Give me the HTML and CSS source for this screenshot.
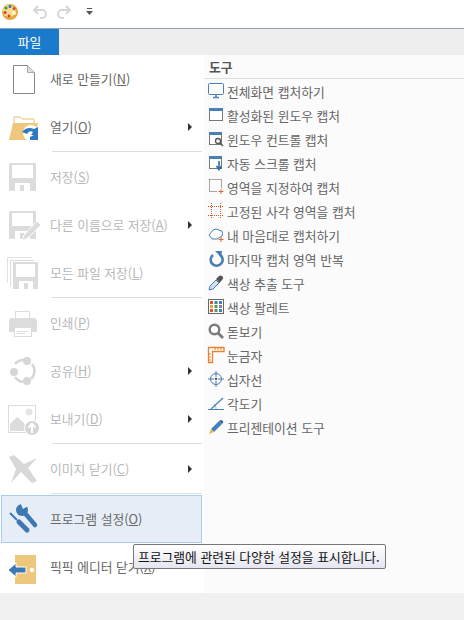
FILE: index.html

```html
<!DOCTYPE html>
<html lang="ko">
<head>
<meta charset="utf-8"/>
<title>픽픽 에디터</title>
<link rel="stylesheet" href="styles.css">
</head>
<body>
<div class="toolbar">
  <svg class="logo" width="18" height="18" viewBox="0 0 18 18">
    <ellipse cx="9" cy="9" rx="8" ry="8" fill="#e6a93e"/>
    <ellipse cx="8" cy="8" rx="6.500" ry="6" fill="#f7dc8c"/>
    <circle cx="5" cy="5" r="1.600" fill="#3f9a3a"/>
    <circle cx="9" cy="3.600" r="1.500" fill="#2f78c4"/>
    <circle cx="13" cy="5.400" r="1.500" fill="#d9483a"/>
    <circle cx="4" cy="9.500" r="1.600" fill="#d93a3a"/>
    <circle cx="8" cy="13" r="1.400" fill="#d93a3a"/>
    <circle cx="13" cy="10" r="2" fill="#fff3cf"/>
  </svg>
  <svg class="undo" width="16" height="16" viewBox="0 0 16 16"><path d="M6 2 L2 6 L6 10 M2.500 6 H10 A4 4 0 0 1 10 14 H8" fill="none" stroke="#d6d6d6" stroke-width="2"/></svg>
  <svg class="redo" width="16" height="16" viewBox="0 0 16 16"><path d="M10 2 L14 6 L10 10 M13.500 6 H6 A4 4 0 0 0 6 14 H8" fill="none" stroke="#d6d6d6" stroke-width="2"/></svg>
  <svg class="qat" width="7" height="8" viewBox="0 0 7 8"><path d="M1 0.500 H6" stroke="#555"/><path d="M0 3 H7 L3.500 7 Z" fill="#555"/></svg>
</div>
<div class="tabbar"><div class="tab">파일</div></div>

<div class="menu">
  <div class="left">
    <div class="item">
      <svg class="big" width="32" height="32" viewBox="0 0 32 32"><path d="M5.500 2.500 H19.500 L26.500 9.500 V30.500 H5.500 Z" fill="#fff" stroke="#888"/><path d="M19.500 2.500 V9.500 H26.500" fill="#ddd" stroke="#aaa"/></svg>
      <span>새로 만들기(<u>N</u>)</span>
    </div>
    <div class="item arrow">
      <svg class="big" width="32" height="32" viewBox="0 0 32 32"><path d="M6 6 H12 L14 8 H26 V14 H6 Z" fill="#fff" stroke="#e5c078"/><path d="M5 12 H30 L26 29 H1 Z" fill="#edc77c"/><circle cx="23" cy="22" r="8" fill="#fff"/><path d="M14 21 Q19 15 26 18 L30 16 V24 H23 L25 21 Q21 19 19 23 Z" fill="#2f78c4"/><path d="M22 26 L26 24 L30 24 V29 H22 Z" fill="#2f78c4"/></svg>
      <span>열기(<u>O</u>)</span>
    </div>
    <div class="sep"></div>
    <div class="item off">
      <svg class="big" width="32" height="32" viewBox="0 0 32 32"><path d="M1 2 H28 V30 H1 Z" fill="#dcdcdc"/><rect x="4" y="4" width="21" height="13" fill="#fff"/><rect x="7" y="22" width="15" height="8" fill="#fff"/><rect x="12" y="24" width="4" height="6" fill="#dcdcdc"/></svg>
      <span>저장(<u>S</u>)</span>
    </div>
    <div class="item off arrow">
      <svg class="big" width="32" height="32" viewBox="0 0 32 32"><path d="M1 2 H28 V30 H1 Z" fill="#dcdcdc"/><rect x="4" y="4" width="21" height="13" fill="#fff"/><rect x="7" y="22" width="15" height="8" fill="#fff"/><rect x="12" y="24" width="4" height="6" fill="#dcdcdc"/><path d="M16 26 L29 12 L33 16 L20 29 L14 32 Z" fill="#dcdcdc" stroke="#fff"/></svg>
      <span>다른 이름으로 저장(<u>A</u>)</span>
    </div>
    <div class="item off">
      <svg class="big" width="32" height="32" viewBox="0 0 32 32"><path d="M-0.500 26 V0.500 H24" fill="none" stroke="#e2e2e2"/><path d="M2.500 29 V3.500 H26" fill="none" stroke="#dcdcdc"/><path d="M5 5 H30 V32 H5 Z" fill="#dcdcdc"/><rect x="8" y="7" width="19" height="13" fill="#fff"/><rect x="11" y="24" width="14" height="8" fill="#fff"/><rect x="16" y="26" width="4" height="6" fill="#dcdcdc"/></svg>
      <span>모든 파일 저장(<u>L</u>)</span>
    </div>
    <div class="sep"></div>
    <div class="item off">
      <svg class="big" width="32" height="32" viewBox="0 0 32 32"><rect x="7.500" y="4.500" width="14" height="9" fill="#fff" stroke="#dcdcdc"/><path d="M4 11 H25 Q29 11 29 15 V25 H1 V15 Q1 11 4 11 Z" fill="#dcdcdc"/><rect x="6.500" y="20.500" width="17" height="9" fill="#fff" stroke="#dcdcdc"/><path d="M9 24.500 H20 M9 26.500 H17" stroke="#dcdcdc"/></svg>
      <span>인쇄(<u>P</u>)</span>
    </div>
    <div class="item off arrow">
      <svg class="big" width="32" height="32" viewBox="0 0 32 32"><path d="M7 9 A11 11 0 0 1 17 5 M24 9 A11 11 0 0 1 23 24 M7 22 A11 11 0 0 0 15 27" fill="none" stroke="#d6d6d6" stroke-width="2.500"/><circle cx="19" cy="6" r="4" fill="#d6d6d6"/><circle cx="6" cy="17" r="4" fill="#d6d6d6"/><circle cx="19" cy="26" r="4" fill="#d6d6d6"/></svg>
      <span>공유(<u>H</u>)</span>
    </div>
    <div class="item off arrow">
      <svg class="big" width="32" height="32" viewBox="0 0 32 32"><rect x="0.500" y="2.500" width="27" height="27" fill="#fff" stroke="#dcdcdc"/><circle cx="21" cy="9" r="3.500" fill="#e4e4e4"/><path d="M2 28 V21 L9 14 L15 19 L20 26 V28 Z" fill="#dcdcdc"/><circle cx="24" cy="25" r="7.500" fill="#d6d6d6" stroke="#fff"/><path d="M24 30 V21 M20.500 24.500 L24 21 L27.500 24.500" fill="none" stroke="#fff" stroke-width="2"/></svg>
      <span>보내기(<u>D</u>)</span>
    </div>
    <div class="sep"></div>
    <div class="item off arrow">
      <svg class="big" width="32" height="32" viewBox="0 0 32 32"><path d="M1 4 L6 2 L16 11 L29 5 L20 15 L29 28 L24 30 L13 19 L3 30 L8 16 Z" fill="#d8d8d8"/></svg>
      <span>이미지 닫기(<u>C</u>)</span>
    </div>
    <div class="sep"></div>
    <div class="item hover">
      <svg class="big" width="32" height="32" viewBox="0 0 32 32">
        <circle cx="14" cy="7" r="6" fill="#3d78b4"/>
        <path d="M12 -1 L15 6 L20 3 L20 -2 Z" fill="#e6edf6"/>
        <path d="M16 9 L27 22" stroke="#3d78b4" stroke-width="4.500" stroke-linecap="round"/>
        <path d="M2 10 L9 17" stroke="#3d78b4" stroke-width="2"/>
        <path d="M11 19 L19 27" stroke="#3d78b4" stroke-width="5" stroke-linecap="round"/>
      </svg>
      <span>프로그램 설정(<u>O</u>)</span>
    </div>
    <div class="item">
      <svg class="big" width="32" height="32" viewBox="0 0 32 32"><rect x="7" y="4" width="21" height="29" fill="#edc77c"/><circle cx="24" cy="19" r="2.200" fill="#fff"/><path d="M0 19 L8 12 V16 H18 V22 H8 V26 Z" fill="#3d78b4" stroke="#fff"/></svg>
      <span>픽픽 에디터 닫기(<u>X</u>)</span>
    </div>
  </div>

  <div class="right">
    <div class="head">도구</div>
    <div class="row">
      <svg width="16" height="16" viewBox="0 0 16 16"><rect x="0.500" y="0.500" width="15" height="11" rx="1" fill="#fff" stroke="#4a7fb5"/><path d="M8 12 V14 M5 14.500 H11" stroke="#4a7fb5" stroke-width="1.500"/></svg>
      <span>전체화면 캡처하기</span>
    </div>
    <div class="row">
      <svg width="16" height="16" viewBox="0 0 16 16"><rect x="1.500" y="1.500" width="13" height="12" fill="#fff" stroke="#777"/><rect x="1" y="1" width="14" height="3" fill="#4a7fb5"/></svg>
      <span>활성화된 윈도우 캡처</span>
    </div>
    <div class="row">
      <svg width="16" height="16" viewBox="0 0 16 16"><rect x="1.500" y="1.500" width="12" height="12" fill="#fff" stroke="#777"/><rect x="1" y="1" width="13" height="3" fill="#4a7fb5"/><circle cx="10" cy="10" r="2.500" fill="#fff" stroke="#555" stroke-width="1.300"/><path d="M12 12 L15 15" stroke="#555" stroke-width="1.500"/></svg>
      <span>윈도우 컨트롤 캡처</span>
    </div>
    <div class="row">
      <svg width="16" height="16" viewBox="0 0 16 16"><rect x="1.500" y="1.500" width="12" height="12" fill="#fff" stroke="#777"/><rect x="1" y="1" width="13" height="3" fill="#4a7fb5"/><path d="M11 6 V13 M8.500 11 L11 14.500 L13.500 11" fill="none" stroke="#2f6eaa" stroke-width="1.600"/></svg>
      <span>자동 스크롤 캡처</span>
    </div>
    <div class="row">
      <svg width="16" height="16" viewBox="0 0 16 16"><path d="M1.500 0.500 H13.500 V9 M1.500 0.500 V12.500 H9" fill="none" stroke="#555" stroke-dasharray="1 1"/><path d="M13 10 V15 M10.500 12.500 H15.500" stroke="#e8662c"/></svg>
      <span>영역을 지정하여 캡처</span>
    </div>
    <div class="row">
      <svg width="16" height="16" viewBox="0 0 16 16"><path d="M0 3.500 H16 M0 12.500 H16 M3.500 0 V16 M12.500 0 V16" stroke="#d9552a" stroke-dasharray="1 1"/></svg>
      <span>고정된 사각 영역을 캡처</span>
    </div>
    <div class="row">
      <svg width="16" height="16" viewBox="0 0 16 16"><path d="M1 8 L5 3 Q8 1 11 3 L14 4 Q15 7 14 9 L9 12 L4 12 Z" fill="none" stroke="#4d7fb4"/><path d="M13 10 V15 M10.500 12.500 H15.500" stroke="#e8662c"/></svg>
      <span>내 마음대로 캡처하기</span>
    </div>
    <div class="row">
      <svg width="16" height="16" viewBox="0 0 16 16"><path d="M5 4 A6 6 0 1 0 11.500 3.500" fill="none" stroke="#4a7fb5" stroke-width="2.600"/><path d="M7 0 H14 L13 6 Z" fill="#4a7fb5"/></svg>
      <span>마지막 캡처 영역 반복</span>
    </div>
    <div class="row">
      <svg width="16" height="16" viewBox="0 0 16 16"><path d="M1 15 L2 11 L8 5 L11 8 L5 14 Z" fill="#cfe0f0" stroke="#4a7fb5"/><path d="M8 4 L11 1 Q13 0 14.500 1.500 Q16 3 14 5 L11.500 8 Z" fill="#555"/></svg>
      <span>색상 추출 도구</span>
    </div>
    <div class="row">
      <svg width="16" height="16" viewBox="0 0 16 16"><rect x="0.500" y="0.500" width="15" height="14" fill="#fff" stroke="#666"/><path d="M2 2 H5 V5 H2 Z" fill="#d9552a"/><path d="M6.500 2 H9.500 V5 H6.500 Z" fill="#4a7fb5"/><path d="M11 2 H14 V5 H11 Z" fill="#4a7fb5"/><path d="M2 6 H5 V9 H2 Z" fill="#e8a23c"/><path d="M6.500 6 H9.500 V9 H6.500 Z" fill="#4c9a6a"/><path d="M11 6 H14 V9 H11 Z" fill="#888"/><path d="M2 10 H5 V13 H2 Z" fill="#d9552a"/><path d="M6.500 10 H9.500 V13 H6.500 Z" fill="#4c9a6a"/><path d="M11 10 H14 V13 H11 Z" fill="#4a7fb5"/></svg>
      <span>색상 팔레트</span>
    </div>
    <div class="row">
      <svg width="16" height="16" viewBox="0 0 16 16"><circle cx="6.500" cy="6.500" r="4.800" fill="#fff" stroke="#7a7a7a" stroke-width="2.400"/><path d="M10 10 L15 15" stroke="#7a7a7a" stroke-width="2.800"/></svg>
      <span>돋보기</span>
    </div>
    <div class="row">
      <svg width="16" height="16" viewBox="0 0 16 16"><path d="M0.500 15.500 V0.500 H16 V4.500 H4.500 V15.500 Z" fill="#fff" stroke="#e8822c" stroke-width="1.300"/><path d="M7 1 V3 M10 1 V3 M13 1 V3 M1 7 H3 M1 10 H3 M1 13 H3" stroke="#e8822c"/></svg>
      <span>눈금자</span>
    </div>
    <div class="row">
      <svg width="16" height="16" viewBox="0 0 16 16"><circle cx="8" cy="8" r="5.500" fill="none" stroke="#4d7fb4"/><path d="M8 0 V6 M8 10 V16 M0 8 H6 M10 8 H16" stroke="#4d7fb4"/><circle cx="8" cy="8" r="1.200" fill="#555"/></svg>
      <span>십자선</span>
    </div>
    <div class="row">
      <svg width="16" height="16" viewBox="0 0 16 16"><path d="M0 14.500 H16" stroke="#4a7fb5"/><path d="M3 14 L15 3" stroke="#4a7fb5" stroke-width="1.200"/><path d="M6 9 Q8 11 8 14" fill="none" stroke="#4a7fb5" stroke-dasharray="1 1"/></svg>
      <span>각도기</span>
    </div>
    <div class="row">
      <svg width="16" height="16" viewBox="0 0 16 16"><path d="M3 10 L11 2 L14 5 L6 13 Z" fill="#4a7fb5"/><path d="M11 2 Q13 0 15 2 Q16 3.500 14 5 Z" fill="#2f6eaa"/><path d="M3 10 L6 13 L1 15 Z" fill="#e8b64c"/></svg>
      <span>프리젠테이션 도구</span>
    </div>
  </div>
</div>
<div class="foot"></div>

<div class="tooltip">프로그램에 관련된 다양한 설정을 표시합니다.</div>
</body>
</html>
```

FILE: styles.css

```css
* { box-sizing: border-box; }
html, body { margin: 0; height: 100%; }
body {
  position: relative;
  height: 620px;
  overflow: hidden;
  background: #f0f0f0;
  color: #444;
  font-family: "Noto Sans CJK KR", "Noto Sans", sans-serif;
  font-size: 12.8px;
  display: flex;
  flex-direction: column;
}
svg { display: block; flex: none; overflow: visible; }

.toolbar { height: 29px; flex: none; background: #fff; border-bottom: 1px solid #8ea0b8; display: flex; align-items: center; padding-bottom: 4px; }
.logo { margin-left: 1px; }
.undo { margin-left: 13px; }
.redo { margin-left: 8px; }
.qat { margin-left: 14px; }

.tabbar { height: 26px; flex: none; background: #eee; }
.tab { width: 59px; height: 26px; background: #1a7acb; color: #fff; text-align: center; line-height: 26px; }

.menu { height: 538px; flex: none; display: flex; background: #fff; }
.left { width: 204px; flex: none; }
.right { flex: 1; background: #fbfbfb; }

.item { height: 48px; display: flex; align-items: center; padding-left: 8px; position: relative; margin-right: 2px; color: #666; }
.item .big { margin-right: 10px; }
.item span { line-height: 48px; }
.item.off { color: #b8b8b8; }
.item.hover { background: #e6edf6; border: 1px solid #a8ccf2; margin-left: 1px; padding-left: 6px; }
.item.arrow::after { content: ""; position: absolute; left: 188px; top: 20px; border-left: 4px solid #333; border-top: 4px solid transparent; border-bottom: 4px solid transparent; }
.sep { height: 2px; margin-left: 52px; margin-right: 2px; border-top: 1px solid #ddd; }

.head { height: 24px; padding: 2px 0 0 5px; font-weight: 700; color: #555; line-height: 20px; border-bottom: 1px solid #ddd; }
.row { height: 24px; display: flex; align-items: center; gap: 3px; padding-left: 4px; color: #666; }

.foot { flex: 1; background: #f0f0f0; }

.tooltip {
  position: absolute;
  left: 133px;
  top: 544px;
  width: 253px;
  height: 25px;
  padding-left: 4px;
  line-height: 23px;
  color: #111;
  white-space: nowrap;
  border: 1px solid #777;
  border-radius: 2px;
  background: linear-gradient(#fff, #e4e5f0);
}
```
